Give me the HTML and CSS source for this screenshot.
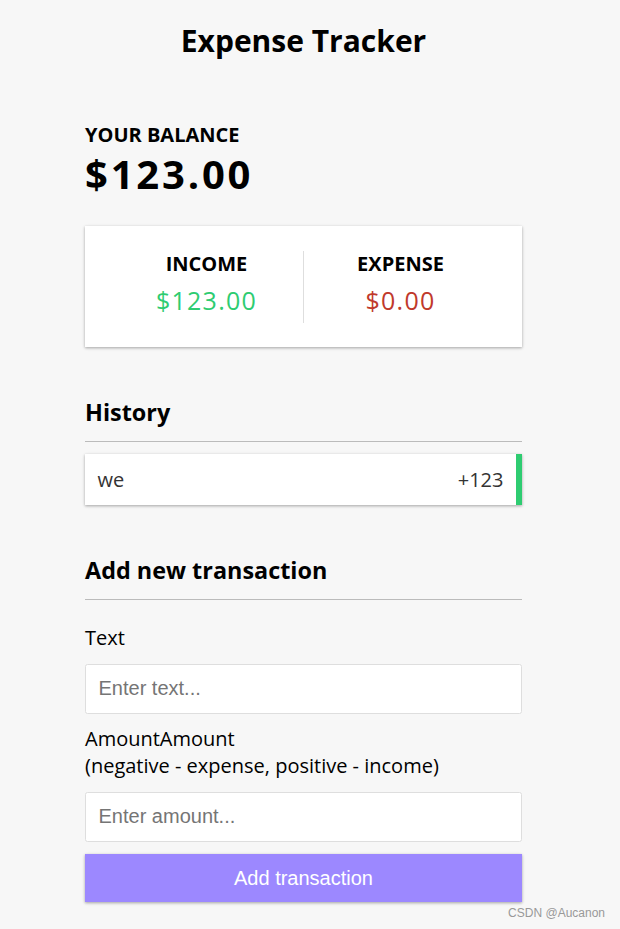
FILE: index.html
```html
<!DOCTYPE html>
<html lang="en">
    <head>
        <meta charset="UTF-8" />
        <meta name="viewport" content="width=device-width, initial-scale=1.0" />
        <title>Expense Tracker</title>
        <link rel="stylesheet" href="styles.css">
    </head>
    <body>
        <h2 class="title">Expense Tracker</h2>

        <div class="container">
            <h4>Your Balance</h4>
            <h1 class="balance">$123.00</h1>

            <div class="inc-exp-container">
                <div>
                    <h4>Income</h4>
                    <p class="money plus">$123.00</p>
                </div>
                <div>
                    <h4>Expense</h4>
                    <p class="money minus">$0.00</p>
                </div>
            </div>

            <h3>History</h3>
            <ul class="list">
                <li class="plus">we <span>+123</span></li>
            </ul>

            <h3>Add new transaction</h3>
            <form>
                <div class="form-control">
                    <label for="text">Text</label>
                    <input type="text" id="text" placeholder="Enter text..." />
                </div>
                <div class="form-control">
                    <label for="amount">AmountAmount <br />(negative - expense, positive - income)</label>
                    <input type="number" id="amount" placeholder="Enter amount..." />
                </div>
                <button class="btn" type="button">Add transaction</button>
            </form>
        </div>

        <div class="watermark">CSDN @Aucanon</div>
    </body>
</html>
```

FILE: styles.css
```css
* {
    box-sizing: border-box;
}
body {
    background: #f7f7f7;
    font-family: "Open Sans", "Noto Sans", sans-serif;
    line-height: 1.32;
    color: #000;
    margin: 0;
    padding-right: 13px;
    display: flex;
    flex-direction: column;
    align-items: center;
}
.title {
    font-size: 30px;
    margin: 21px 0 24px;
}
.container {
    width: 437px;
    margin: 37.5px 0 0;
}
h1, h4 {
    margin: 0;
}
h4 {
    font-size: 20px;
    text-transform: uppercase;
}
.balance {
    font-size: 40px;
    letter-spacing: 2.8px;
}
h3 {
    font-size: 23.4px;
    border-bottom: 1.25px solid #bbb;
    padding-bottom: 12.5px;
    margin: 50px 0 12.5px;
}
.inc-exp-container {
    background: #fff;
    box-shadow: 0 1.25px 3.75px rgba(0, 0, 0, 0.12), 0 1.25px 2.5px rgba(0, 0, 0, 0.24);
    padding: 25px 25px 24px;
    display: flex;
    justify-content: space-between;
    margin: 25px 0;
}
.inc-exp-container > div {
    flex: 1;
    text-align: center;
}
.inc-exp-container > div:first-of-type {
    border-right: 1.25px solid #dedede;
}
.money {
    font-size: 25px;
    letter-spacing: 1.25px;
    margin: 6.25px 0;
}
.money.plus {
    color: #2ecc71;
}
.money.minus {
    color: #c0392b;
}
.list {
    list-style: none;
    padding: 0;
    margin: 0 0 50px;
}
.list li {
    background: #fff;
    box-shadow: 0 1.25px 3.75px rgba(0, 0, 0, 0.12), 0 1.25px 2.5px rgba(0, 0, 0, 0.24);
    color: #333;
    font-size: 20px;
    display: flex;
    justify-content: space-between;
    padding: 12.5px;
    margin: 12.5px 0;
}
.list li.plus {
    border-right: 6.25px solid #2ecc71;
}
label {
    display: inline-block;
    font-size: 20px;
    margin: 12.5px 0;
}
input {
    border: 1.25px solid #dedede;
    border-radius: 2.5px;
    display: block;
    font-family: "Liberation Sans", Arial, sans-serif;
    font-size: 20px;
    padding: 12.5px;
    width: 100%;
    background: #fff;
}
input::placeholder {
    color: #757575;
}
.btn {
    cursor: pointer;
    background: #9c88ff;
    box-shadow: 0 1.25px 3.75px rgba(0, 0, 0, 0.12), 0 1.25px 2.5px rgba(0, 0, 0, 0.24);
    color: #fff;
    border: 0;
    display: block;
    font-family: "Liberation Sans", Arial, sans-serif;
    font-size: 20px;
    margin: 12.5px 0 37.5px;
    padding: 12.5px;
    width: 100%;
}
.watermark {
    position: absolute;
    top: 906px;
    right: 15px;
    font-family: "Liberation Sans", Arial, sans-serif;
    font-size: 12px;
    color: #999;
}
```
